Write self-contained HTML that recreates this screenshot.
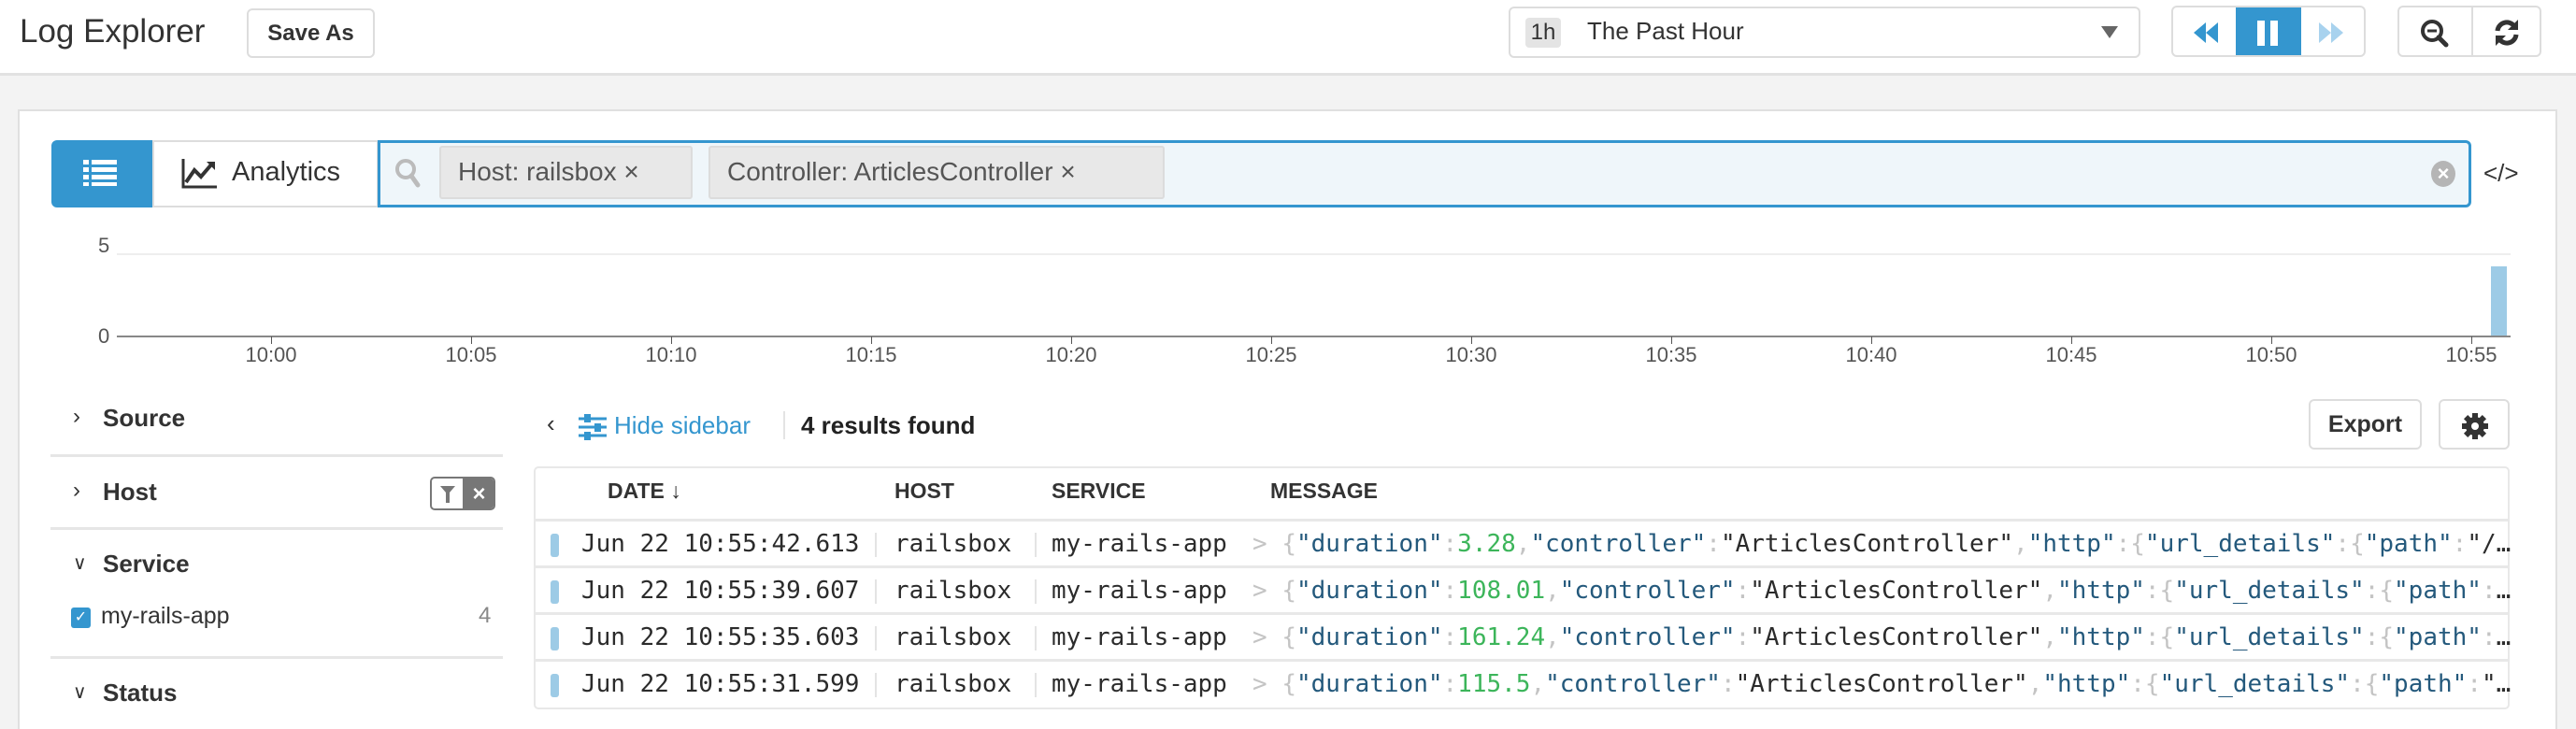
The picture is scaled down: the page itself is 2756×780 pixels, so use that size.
<!DOCTYPE html>
<html><head><meta charset="utf-8"><style>
*{box-sizing:border-box;margin:0;padding:0}
body{width:2756px;height:780px;overflow:hidden;background:#f3f3f3;font-family:"Liberation Sans",sans-serif;color:#333;position:relative}
.a{position:absolute}
.top{left:0;top:0;width:2756px;height:81px;background:#fff;border-bottom:3px solid #e2e2e2}
.btn{position:absolute;background:#fff;border:2px solid #ddd;border-radius:6px}
.panel{left:19px;top:117px;width:2717px;height:663px;background:#fff;border:2px solid #e0e0e0;border-bottom:none}
.mono{font-family:"DejaVu Sans Mono","Liberation Mono",monospace;font-size:26px}
.k{color:#24597c}.s{color:#2b2b2b}.n{color:#3cb55a}.p{color:#c4c4c4}
.sep{position:absolute;height:3px;background:#e6e6e6;left:54px;width:484px}
.sh{position:absolute;left:80px;font-size:26px;font-weight:bold;color:#333}
.xl{position:absolute;top:367px;font-size:22px;color:#555;width:80px;margin-left:-40px;text-align:center}
.tk{position:absolute;top:360px;width:1px;height:8px;background:#555}
.row{position:absolute;left:571px;width:2114px;height:50px;border-top:3px solid #e8e8e8}
.row .bar{position:absolute;left:18px;top:13px;width:9px;height:25px;background:#9dcbe6;border-radius:3px}
.row .t{position:absolute;top:9px;white-space:nowrap}
.vs{position:absolute;top:12px;width:2px;height:26px;background:#e4e4e4}
</style></head><body>
<div class="a top"></div>
<div class="a" style="left:21px;top:14px;font-size:35px;color:#333">Log Explorer</div>
<div class="btn" style="left:264px;top:9px;width:137px;height:53px;font-size:24px;font-weight:bold;text-align:center;line-height:49px">Save As</div>
<div class="btn" style="left:1614px;top:7px;width:676px;height:55px">
 <div class="a" style="left:16px;top:10px;width:38px;height:32px;background:#e4e4e4;border-radius:4px;font-size:24px;text-align:center;line-height:32px">1h</div>
 <div class="a" style="left:82px;top:9px;font-size:26px">The Past Hour</div>
 <div class="a" style="right:22px;top:19px;width:0;height:0;border-left:9px solid transparent;border-right:9px solid transparent;border-top:13px solid #666"></div>
</div>
<div class="btn" style="left:2323px;top:6px;width:208px;height:55px;overflow:hidden">
 <svg class="a" style="left:22px;top:16px" width="26" height="22"><path d="M13 0L0 11L13 22ZM26 0L13 11L26 22Z" fill="#3496cf"/></svg>
 <div class="a" style="left:67px;top:-2px;width:70px;height:57px;background:#3496cf"></div>
 <div class="a" style="left:90px;top:14px;width:8px;height:27px;background:#fff"></div>
 <div class="a" style="left:104px;top:14px;width:8px;height:27px;background:#fff"></div>
 <svg class="a" style="left:156px;top:16px" width="26" height="22"><path d="M0 0L13 11L0 22ZM13 0L26 11L13 22Z" fill="#a8d2ee"/></svg>
</div>
<div class="btn" style="left:2565px;top:6px;width:154px;height:55px">
 <div class="a" style="left:77px;top:0;width:2px;height:51px;background:#ddd"></div>
 <svg class="a" style="left:22px;top:12px" width="32" height="32"><circle cx="13" cy="13" r="10" fill="none" stroke="#333" stroke-width="4"/><path d="M8 13H18" stroke="#333" stroke-width="3"/><path d="M20 20L28 28" stroke="#333" stroke-width="5" stroke-linecap="round"/></svg>
 <svg class="a" style="left:101px;top:13px" width="28" height="28"><path d="M4 12A10 10 0 0 1 22 7" fill="none" stroke="#333" stroke-width="5"/><path d="M26 0V11H15Z" fill="#333"/><path d="M24 16A10 10 0 0 1 6 21" fill="none" stroke="#333" stroke-width="5"/><path d="M2 28V17H13Z" fill="#333"/></svg>
</div>

<div class="a panel"></div>
<div class="a" style="left:55px;top:150px;width:108px;height:72px;background:#3496cf;border-radius:6px 0 0 6px"></div>
<svg class="a" style="left:89px;top:171px" width="36" height="28"><g fill="#fff"><rect x="0" y="0" width="6" height="5"/><rect x="9" y="0" width="27" height="5"/><rect x="0" y="8" width="6" height="5"/><rect x="9" y="8" width="27" height="5"/><rect x="0" y="16" width="6" height="5"/><rect x="9" y="16" width="27" height="5"/><rect x="0" y="24" width="6" height="4"/><rect x="9" y="24" width="27" height="4"/></g></svg>
<div class="a" style="left:163px;top:150px;width:242px;height:72px;border:2px solid #ddd;background:#fff"></div>
<svg class="a" style="left:194px;top:170px" width="40" height="32"><path d="M2 0V30H38" fill="none" stroke="#333" stroke-width="3"/><path d="M5 25L14 12L21 19L33 5" fill="none" stroke="#333" stroke-width="4"/><path d="M27 3H36V12Z" fill="#333"/></svg>
<div class="a" style="left:248px;top:168px;font-size:29px;color:#333">Analytics</div>
<div class="a" style="left:404px;top:150px;width:2240px;height:72px;border:3px solid #3496cf;background:#eff6fa;border-radius:0 6px 6px 0"></div>
<svg class="a" style="left:422px;top:169px" width="30" height="34"><circle cx="12" cy="12" r="9" fill="none" stroke="#bbb" stroke-width="4"/><path d="M18 19L25 29" stroke="#bbb" stroke-width="5" stroke-linecap="round"/></svg>
<div class="a" style="left:470px;top:156px;width:271px;height:57px;background:#e8e8e8;border:2px solid #dcdcdc;border-radius:3px;font-size:28px;color:#555;line-height:52px;padding-left:18px">Host: railsbox <span style="color:#555">×</span></div>
<div class="a" style="left:758px;top:156px;width:488px;height:57px;background:#e8e8e8;border:2px solid #dcdcdc;border-radius:3px;font-size:28px;color:#555;line-height:52px;padding-left:18px">Controller: ArticlesController <span>×</span></div>
<div class="a" style="left:2601px;top:172px;width:26px;height:28px;border-radius:50%;background:#b5b5b5;color:#fff;font-size:22px;font-weight:bold;text-align:center;line-height:28px">×</div>
<div class="a" style="left:2657px;top:170px;font-size:26px;color:#333">&lt;/&gt;</div>

<div class="a" style="left:105px;top:250px;font-size:22px;color:#555">5</div>
<div class="a" style="left:125px;top:271px;width:2561px;height:2px;background:#eee"></div>
<div class="a" style="left:105px;top:347px;font-size:22px;color:#555">0</div>
<div class="a" style="left:125px;top:359px;width:2561px;height:2px;background:#888"></div>
<div class="a" style="left:2665px;top:285px;width:17px;height:74px;background:#9dcbe6"></div>
<div class="tk" style="left:290px"></div><div class="xl" style="left:290px">10:00</div>
<div class="tk" style="left:504px"></div><div class="xl" style="left:504px">10:05</div>
<div class="tk" style="left:718px"></div><div class="xl" style="left:718px">10:10</div>
<div class="tk" style="left:932px"></div><div class="xl" style="left:932px">10:15</div>
<div class="tk" style="left:1146px"></div><div class="xl" style="left:1146px">10:20</div>
<div class="tk" style="left:1360px"></div><div class="xl" style="left:1360px">10:25</div>
<div class="tk" style="left:1574px"></div><div class="xl" style="left:1574px">10:30</div>
<div class="tk" style="left:1788px"></div><div class="xl" style="left:1788px">10:35</div>
<div class="tk" style="left:2002px"></div><div class="xl" style="left:2002px">10:40</div>
<div class="tk" style="left:2216px"></div><div class="xl" style="left:2216px">10:45</div>
<div class="tk" style="left:2430px"></div><div class="xl" style="left:2430px">10:50</div>
<div class="tk" style="left:2644px"></div><div class="xl" style="left:2644px">10:55</div>

<div class="a" style="left:78px;top:432px;font-size:24px;color:#333">›</div>
<div class="sh" style="left:110px;top:432px">Source</div>
<div class="sep" style="top:486px"></div>
<div class="a" style="left:78px;top:511px;font-size:24px;color:#333">›</div>
<div class="sh" style="left:110px;top:511px">Host</div>
<div class="a" style="left:460px;top:510px;width:70px;height:36px;border:2px solid #777;border-radius:5px;overflow:hidden;background:#fff"><div class="a" style="left:33px;top:0;width:35px;height:34px;background:#777;color:#fff;font-weight:bold;font-size:24px;text-align:center;line-height:33px">×</div><svg class="a" style="left:9px;top:8px" width="16" height="18"><path d="M0 0H16L10 7V18H6V7Z" fill="#777"/></svg></div>
<div class="sep" style="top:564px"></div>
<div class="a" style="left:78px;top:590px;font-size:20px;color:#333">∨</div>
<div class="sh" style="left:110px;top:588px">Service</div>
<div class="a" style="left:76px;top:650px;width:21px;height:22px;background:#3496cf;border-radius:3px;color:#fff;font-size:16px;text-align:center;line-height:22px">✓</div>
<div class="a" style="left:108px;top:645px;font-size:25px;color:#333">my-rails-app</div>
<div class="a" style="left:512px;top:645px;font-size:24px;color:#888">4</div>
<div class="sep" style="top:702px"></div>
<div class="a" style="left:78px;top:728px;font-size:20px;color:#333">∨</div>
<div class="sh" style="left:110px;top:726px">Status</div>

<div class="a" style="left:585px;top:438px;font-size:26px;color:#333">‹</div>
<svg class="a" style="left:619px;top:443px" width="30" height="28"><g stroke="#3496cf" stroke-width="3"><path d="M0 5H30M0 14H30M0 23H30"/></g><g fill="#3496cf"><rect x="6" y="0" width="7" height="9"/><rect x="17" y="10" width="7" height="9"/><rect x="6" y="19" width="7" height="9"/></g></svg>
<div class="a" style="left:657px;top:440px;font-size:26px;color:#3496cf">Hide sidebar</div>
<div class="a" style="left:838px;top:440px;width:2px;height:30px;background:#e4e4e4"></div>
<div class="a" style="left:857px;top:440px;font-size:26px;font-weight:bold;color:#222">4 results found</div>
<div class="btn" style="left:2470px;top:427px;width:121px;height:54px;font-size:25px;font-weight:bold;text-align:center;line-height:50px">Export</div>
<div class="btn" style="left:2609px;top:427px;width:76px;height:54px"><svg class="a" style="left:22px;top:12px" width="30" height="30" viewBox="0 0 30 30"><g fill="#333"><circle cx="15" cy="15" r="10"/><rect x="12" y="1" width="6" height="28"/><rect x="1" y="12" width="28" height="6"/><rect x="12" y="1" width="6" height="28" transform="rotate(45 15 15)"/><rect x="12" y="1" width="6" height="28" transform="rotate(-45 15 15)"/></g><circle cx="15" cy="15" r="4" fill="#fff"/></svg></div>

<div class="a" style="left:571px;top:499px;width:2114px;height:260px;border:2px solid #e8e8e8;border-radius:5px;background:#fff"></div>
<div class="a" style="left:650px;top:512px;font-size:23px;font-weight:bold;color:#333">DATE ↓</div>
<div class="a" style="left:957px;top:512px;font-size:23px;font-weight:bold;color:#333">HOST</div>
<div class="a" style="left:1125px;top:512px;font-size:23px;font-weight:bold;color:#333">SERVICE</div>
<div class="a" style="left:1359px;top:512px;font-size:23px;font-weight:bold;color:#333">MESSAGE</div>

<div class="row mono" style="top:555px"><div class="bar"></div><div class="t s" style="left:51px">Jun 22 10:55:42.613</div><div class="vs" style="left:365px"></div><div class="t s" style="left:386px">railsbox</div><div class="vs" style="left:536px"></div><div class="t s" style="left:554px">my-rails-app</div><div class="t" style="left:769px"><span class="p">&gt;</span> <span class="p">{</span><span class="k">"duration"</span><span class="p">:</span><span class="n">3.28</span><span class="p">,</span><span class="k">"controller"</span><span class="p">:</span><span class="s">"ArticlesController"</span><span class="p">,</span><span class="k">"http"</span><span class="p">:{</span><span class="k">"url_details"</span><span class="p">:{</span><span class="k">"path"</span><span class="p">:</span><span class="s">"/…</span></div></div>
<div class="row mono" style="top:605px"><div class="bar"></div><div class="t s" style="left:51px">Jun 22 10:55:39.607</div><div class="vs" style="left:365px"></div><div class="t s" style="left:386px">railsbox</div><div class="vs" style="left:536px"></div><div class="t s" style="left:554px">my-rails-app</div><div class="t" style="left:769px"><span class="p">&gt;</span> <span class="p">{</span><span class="k">"duration"</span><span class="p">:</span><span class="n">108.01</span><span class="p">,</span><span class="k">"controller"</span><span class="p">:</span><span class="s">"ArticlesController"</span><span class="p">,</span><span class="k">"http"</span><span class="p">:{</span><span class="k">"url_details"</span><span class="p">:{</span><span class="k">"path"</span><span class="p">:</span><span class="s">…</span></div></div>
<div class="row mono" style="top:655px"><div class="bar"></div><div class="t s" style="left:51px">Jun 22 10:55:35.603</div><div class="vs" style="left:365px"></div><div class="t s" style="left:386px">railsbox</div><div class="vs" style="left:536px"></div><div class="t s" style="left:554px">my-rails-app</div><div class="t" style="left:769px"><span class="p">&gt;</span> <span class="p">{</span><span class="k">"duration"</span><span class="p">:</span><span class="n">161.24</span><span class="p">,</span><span class="k">"controller"</span><span class="p">:</span><span class="s">"ArticlesController"</span><span class="p">,</span><span class="k">"http"</span><span class="p">:{</span><span class="k">"url_details"</span><span class="p">:{</span><span class="k">"path"</span><span class="p">:</span><span class="s">…</span></div></div>
<div class="row mono" style="top:705px"><div class="bar"></div><div class="t s" style="left:51px">Jun 22 10:55:31.599</div><div class="vs" style="left:365px"></div><div class="t s" style="left:386px">railsbox</div><div class="vs" style="left:536px"></div><div class="t s" style="left:554px">my-rails-app</div><div class="t" style="left:769px"><span class="p">&gt;</span> <span class="p">{</span><span class="k">"duration"</span><span class="p">:</span><span class="n">115.5</span><span class="p">,</span><span class="k">"controller"</span><span class="p">:</span><span class="s">"ArticlesController"</span><span class="p">,</span><span class="k">"http"</span><span class="p">:{</span><span class="k">"url_details"</span><span class="p">:{</span><span class="k">"path"</span><span class="p">:</span><span class="s">"…</span></div></div>
</body></html>
